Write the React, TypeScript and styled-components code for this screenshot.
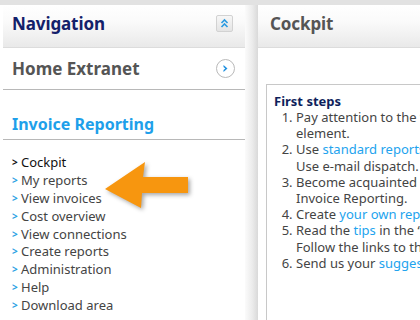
import styled, { createGlobalStyle } from "styled-components";

const GlobalStyle = createGlobalStyle`
    html, body {
        margin: 0;
        padding: 0;
        background: #ffffff;
        overflow: hidden;
    }
    body {
        font-family: "Noto Sans", "Open Sans", sans-serif;
        font-size: 13px;
        color: #333;
    }
`;

const Page = styled.div`
    display: grid;
    grid-template-columns: 242px 13px 1fr;
    width: 420px;
    height: 320px;
    border-top: 5px solid #e2e2e2;
    padding-left: 3px;
    box-sizing: border-box;
    overflow: hidden;
`;

const Gutter = styled.div`
    background: linear-gradient(to right, #fbfbfb 0%, #ececec 55%, #d9d9d9 100%);
`;

const Column = styled.div`
    position: relative;
    display: flex;
    flex-direction: column;
    background: #fff;
    min-width: 0;
`;

const Header = styled.div<{ $pad: number }>`
    height: 43px;
    display: flex;
    align-items: center;
    justify-content: space-between;
    padding: 0 10px 6px ${p => p.$pad}px;
    background: linear-gradient(to bottom, #ffffff 0%, #fafafa 40%, #e9e9e9 100%);
    border-bottom: 1px solid #dcdcdc;
    box-sizing: border-box;
`;

const HeaderTitle = styled.h2<{ $color: string }>`
    margin: 0;
    font-size: 17px;
    font-weight: 700;
    color: ${p => p.$color};
    letter-spacing: -0.1px;
`;

const SquareButton = styled.div`
    width: 17px;
    height: 17px;
    border-radius: 2px;
    border: 1px solid #d2d2d2;
    background: linear-gradient(to bottom, #f7f7f7, #e4e4e4);
    display: flex;
    align-items: center;
    justify-content: center;
    box-sizing: border-box;
    margin-right: 2px;
`;

const CircleButton = styled.div`
    width: 19px;
    height: 19px;
    border-radius: 50%;
    border: 1px solid #b9b9b9;
    background: #fff;
    display: flex;
    align-items: center;
    justify-content: center;
    box-sizing: border-box;
    margin-right: 1px;
`;

const Row = styled.div`
    height: 41px;
    display: flex;
    align-items: center;
    justify-content: space-between;
    padding: 0 9px;
    border-bottom: 1px solid #b8b8b8;
`;

const RowTitle = styled.span`
    font-size: 17px;
    font-weight: 700;
    color: #555;
`;

const Section = styled.div`
    margin-top: 24px;
    padding: 0 9px 4px;
    line-height: 20px;
    border-bottom: 1px solid #b8b8b8;
`;

const SectionTitle = styled.span`
    font-size: 16px;
    font-weight: 700;
    color: #1ea0ea;
`;

const NavList = styled.ul`
    list-style: none;
    margin: 14px 0 0 0;
    padding: 0 0 0 9px;
    display: flex;
    flex-direction: column;
`;

const NavItem = styled.li<{ $active?: boolean }>`
    height: 17.9px;
    line-height: 17.9px;
    display: flex;
    align-items: center;
    gap: 1px;
    color: ${p => (p.$active ? "#111" : "#444")};
    font-size: 13px;
    white-space: nowrap;
`;

const Bullet = styled.span<{ $active?: boolean }>`
    font-size: 10px;
    font-weight: 700;
    color: ${p => (p.$active ? "#111" : "#2aa1e4")};
    width: 8px;
`;

const ArrowWrap = styled.div`
    position: absolute;
    left: 100px;
    top: 153px;
    width: 95px;
    height: 56px;
    filter: drop-shadow(2px 2px 2px rgba(0, 0, 0, 0.35));
`;

const Content = styled.div`
    flex: 1;
    padding: 36px 0 0 8px;
`;

const Box = styled.div`
    border: 1px solid #c8c8c8;
    border-right: none;
    height: 300px;
    padding: 8px 0 0 7px;
    width: 400px;
`;

const BoxTitle = styled.h3`
    margin: 0;
    font-size: 13px;
    font-weight: 700;
    color: #0f1f5c;
    line-height: 16px;
`;

const Steps = styled.ol`
    margin: 0;
    padding: 0 0 0 22px;
    color: #444;
    line-height: 16.2px;
    white-space: nowrap;
`;

const Link = styled.span`
    color: #22a3ee;
`;

const chevronUp = (
    <svg width="11" height="11" viewBox="0 0 11 11" fill="none">
        <path d="M2.5 5 L5.5 2 L8.5 5" stroke="#2b9be0" strokeWidth="1.6" />
        <path d="M2.5 9 L5.5 6 L8.5 9" stroke="#2b9be0" strokeWidth="1.6" />
    </svg>
);

const chevronRight = (
    <svg width="9" height="9" viewBox="0 0 9 9">
        <path d="M2.5 1 L6.5 4.5 L2.5 8 L2.5 6 L4.3 4.5 L2.5 3 Z" fill="#1e90e0" />
    </svg>
);

const navItems = [
    "Cockpit",
    "My reports",
    "View invoices",
    "Cost overview",
    "View connections",
    "Create reports",
    "Administration",
    "Help",
    "Download area",
];

export default function App() {
    return (
        <>
            <GlobalStyle />
            <Page>
                <Column>
                    <Header $pad={9}>
                        <HeaderTitle $color="#13206a">Navigation</HeaderTitle>
                        <SquareButton>{chevronUp}</SquareButton>
                    </Header>
                    <Row>
                        <RowTitle>Home Extranet</RowTitle>
                        <CircleButton>{chevronRight}</CircleButton>
                    </Row>
                    <Section>
                        <SectionTitle>Invoice Reporting</SectionTitle>
                    </Section>
                    <NavList>
                        {navItems.map((item, i) => (
                            <NavItem key={item} $active={i === 0}>
                                <Bullet $active={i === 0}>&gt;</Bullet>
                                {item}
                            </NavItem>
                        ))}
                    </NavList>
                    <ArrowWrap>
                        <svg width="95" height="56" viewBox="0 0 95 56">
                            <path d="M2 31 L42 4 L40 19 L85 19 L85 35 L39 35 L38 50 Z" fill="#f7960f" />
                        </svg>
                    </ArrowWrap>
                </Column>
                <Gutter />
                <Column>
                    <Header $pad={12}>
                        <HeaderTitle $color="#555">Cockpit</HeaderTitle>
                    </Header>
                    <Content>
                        <Box>
                            <BoxTitle>First steps</BoxTitle>
                            <Steps>
                                <li>
                                    Pay attention to the “Info” box in the navigation
                                    <br />
                                    element.
                                </li>
                                <li>
                                    Use <Link>standard reports</Link> for a quick overview.
                                    <br />
                                    Use e-mail dispatch.
                                </li>
                                <li>
                                    Become acquainted with the functions of
                                    <br />
                                    Invoice Reporting.
                                </li>
                                <li>
                                    Create <Link>your own reports</Link>.
                                </li>
                                <li>
                                    Read the <Link>tips</Link> in the “Help” area.
                                    <br />
                                    Follow the links to the detailed pages.
                                </li>
                                <li>
                                    Send us your <Link>suggestions</Link>.
                                </li>
                            </Steps>
                        </Box>
                    </Content>
                </Column>
            </Page>
        </>
    );
}
